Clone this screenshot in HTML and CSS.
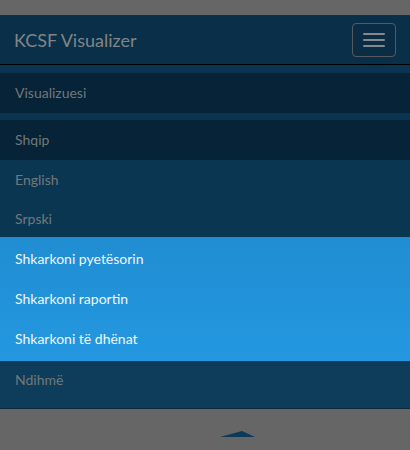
FILE: index.html
```html
<!DOCTYPE html>
<html lang="sq">
<head>
<meta charset="utf-8">
<title>KCSF Visualizer</title>
<link rel="stylesheet" href="styles.css">
</head>
<body>
<div class="spacer"></div>
<nav class="navbar">
  <div class="navbar-header">
    <span class="brand">KCSF Visualizer</span>
    <button class="toggle" type="button" aria-label="Menu">
      <span class="bar"></span><span class="bar"></span><span class="bar"></span>
    </button>
  </div>
  <div class="collapse">
    <ul class="group">
      <li class="item dark">Visualizuesi</li>
    </ul>
    <ul class="group langs">
      <li class="item dark">Shqip</li>
      <li class="item">English</li>
      <li class="item short">Srpski</li>
    </ul>
    <ul class="downloads">
      <li class="item">Shkarkoni pyetësorin</li>
      <li class="item">Shkarkoni raportin</li>
      <li class="item">Shkarkoni të dhënat</li>
    </ul>
    <ul class="group help">
      <li class="item">Ndihmë</li>
    </ul>
  </div>
</nav>
<div class="footer">
  <svg class="caret" width="36" height="8" viewBox="0 0 36 8"><polygon points="0,7 22,1 35,7" fill="#0b3a5a"/></svg>
</div>
</body>
</html>
```
FILE: styles.css
```css
html, body {
  margin: 0;
  padding: 0;
  background: #666666;
  font-family: Lato, "Open Sans", sans-serif;
}
.spacer { height: 15px; }
.navbar {
  background: #0b3450;
  border-bottom: 1px solid #0a2840;
}
.navbar-header {
  height: 49px;
  background: #0a3049;
  border-bottom: 1px solid #000;
  display: flex;
  align-items: center;
  justify-content: space-between;
  padding: 0 14px 0 14px;
}
.brand {
  font-size: 18px;
  color: #7f8587;
  line-height: 20px;
}
.toggle {
  width: 44px;
  height: 34px;
  box-sizing: border-box;
  border: 1px solid #55595c;
  border-radius: 4px;
  background: #0a2d45;
  padding: 9px 10px;
  display: flex;
  flex-direction: column;
  gap: 4px;
  margin-top: 1px;
}
.bar {
  display: block;
  width: 22px;
  height: 2px;
  background: #84888a;
  border-radius: 1px;
}
.collapse {
  padding: 8px 0 0 0;
}
ul {
  list-style: none;
  margin: 0;
  padding: 0;
}
.group + .group { margin-top: 7px; }
.item {
  height: 40px;
  line-height: 40px;
  padding-left: 15px;
  font-size: 14px;
  color: #72787a;
  background: #0b3652;
}
.item.dark { background: #062337; }
.item.short { height: 37px; line-height: 37px; }
.downloads {
  padding: 2px 0;
  background: linear-gradient(#208dd2, #2398e0);
}
.downloads .item {
  background: transparent;
  color: #f2f6f8;
}
.help {
  margin-top: 0;
  background: #0e3c5b;
  padding-bottom: 10px;
}
.help .item {
  background: transparent;
  height: 37px;
  line-height: 37px;
}
.footer {
  display: flex;
  justify-content: center;
  padding-top: 21px;
  padding-left: 66px;
}
.caret { display: block; }
```
